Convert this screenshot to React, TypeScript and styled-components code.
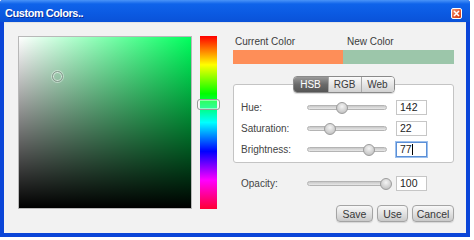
import React from "react";
import styled, { createGlobalStyle } from "styled-components";

const Global = createGlobalStyle`
  html, body { margin: 0; padding: 0; background: #ffffff; }
  * { box-sizing: border-box; }
`;

const Window = styled.div`
  width: 470px;
  height: 237px;
  background: #0b45d8;
  display: flex;
  flex-direction: column;
  font-family: "Liberation Sans", Arial, sans-serif;
  border-radius: 3px 3px 0 0;
`;

const TitleBar = styled.div`
  height: 22px;
  padding: 0 8px 0 5px;
  display: flex;
  align-items: center;
  justify-content: space-between;
  background: linear-gradient(to bottom, #4a94f8 0%, #0f63ea 18%, #0b5ae2 60%, #0a52d8 100%);
  border-radius: 3px 3px 0 0;
`;

const Title = styled.span`
  color: #ffffff;
  font-weight: bold;
  font-size: 11px;
  letter-spacing: -0.45px;
  text-shadow: 1px 1px 0 #0a2f9a;
  padding-top: 3px;
`;

const CloseBtn = styled.div`
  width: 11px;
  height: 11px;
  margin-top: 4px;
  border: 1px solid #ffffff;
  border-radius: 2px;
  background: linear-gradient(135deg, #f39a78 0%, #e2542c 60%, #c83a16 100%);
  display: flex;
  align-items: center;
  justify-content: center;
`;

const Body = styled.div`
  flex: 1;
  margin: 0 4px 4px 4px;
  background: #f2f2f2;
  display: flex;
  padding: 13px 12px 0 14px;
  border-top: 1px solid #e4e4e4;
`;

const Field = styled.div`
  position: relative;
  width: 174px;
  height: 173px;
  flex: none;
  background:
    linear-gradient(to top, #000000, rgba(0, 0, 0, 0)),
    linear-gradient(to right, #ffffff, hsl(142, 100%, 50%));
  border: 1px solid #b8b8b8;
`;

const FieldMarker = styled.div`
  position: absolute;
  width: 11px;
  height: 11px;
  margin: -5.5px 0 0 -5.5px;
  border-radius: 50%;
  border: 1.5px solid #8a9a90;
  box-shadow: inset 0 0 0 1px rgba(255, 255, 255, 0.6), 0 0 0 1px rgba(255, 255, 255, 0.4);
`;

const HueBar = styled.div`
  position: relative;
  width: 17px;
  height: 173px;
  flex: none;
  margin-left: 8px;
  background: linear-gradient(
    to bottom,
    #ff0000 0%,
    #ffff00 16.67%,
    #00ff00 33.33%,
    #00ffff 50%,
    #0000ff 66.67%,
    #ff00ff 83.33%,
    #ff0033 100%
  );
`;

const HueMarker = styled.div`
  position: absolute;
  left: -3px;
  width: 23px;
  height: 11px;
  margin-top: -5px;
  border: 1.5px solid #9a9a9a;
  border-radius: 3px;
  background: rgba(255, 255, 255, 0.18);
  box-shadow: inset 0 0 0 1px rgba(255, 255, 255, 0.45);
`;

const Right = styled.div`
  flex: 1;
  margin-left: 16px;
  display: flex;
  flex-direction: column;
  color: #3c3c3c;
  font-size: 10px;
`;

const LabelRow = styled.div`
  display: flex;
  height: 12px;
  line-height: 12px;
  padding-left: 2px;
`;

const LabelCell = styled.span<{ $w?: number }>`
  width: ${(p) => (p.$w ? `${p.$w}px` : "auto")};
`;

const Swatches = styled.div`
  display: flex;
  height: 14px;
  margin-top: 2px;
`;

const Swatch = styled.div<{ $c: string; $w?: number }>`
  background: ${(p) => p.$c};
  ${(p) => (p.$w ? `width: ${p.$w}px;` : "flex: 1;")}
`;

const Tabs = styled.div`
  position: relative;
  z-index: 1;
  align-self: center;
  margin-top: 12px;
  display: flex;
  height: 17px;
  border: 1px solid #8a8a8a;
  border-radius: 4px;
  overflow: hidden;
  box-shadow: 0 1px 1px rgba(0, 0, 0, 0.15);
`;

const Tab = styled.div<{ $active?: boolean; $w: number }>`
  width: ${(p) => p.$w}px;
  display: flex;
  align-items: center;
  justify-content: center;
  font-size: 10px;
  color: ${(p) => (p.$active ? "#ffffff" : "#3a3a3a")};
  background: ${(p) =>
    p.$active
      ? "linear-gradient(to bottom, #9a9a9a, #6a6a6a 50%, #555555)"
      : "linear-gradient(to bottom, #fbfbfb, #e6e6e6 50%, #d2d2d2)"};
  & + & {
    border-left: 1px solid #a8a8a8;
  }
`;

const Panel = styled.div`
  margin-top: -9px;
  padding: 12px 0 2px 7px;
  background: #ffffff;
  border: 1px solid #c4c4c4;
  border-radius: 3px;
`;

const Row = styled.div`
  display: grid;
  grid-template-columns: 66px 89px 31px;
  align-items: center;
  height: 21px;
`;

const OpacityRow = styled(Row)`
  margin-top: 10px;
  padding-left: 8px;
`;

const RowLabel = styled.span`
  font-size: 10px;
  color: #444444;
`;

const Track = styled.div`
  position: relative;
  width: 80px;
  height: 5px;
  border-radius: 3px;
  border: 1px solid #b4b4b4;
  background: linear-gradient(to bottom, #c8c8c8, #e8e8e8);
`;

const Thumb = styled.div`
  position: absolute;
  top: 50%;
  width: 12px;
  height: 12px;
  margin: -6px 0 0 -6px;
  border-radius: 50%;
  border: 1px solid #9c9c9c;
  background: radial-gradient(circle at 50% 35%, #f4f4f4, #cfcfcf 60%, #b5b5b5);
`;

const Input = styled.div<{ $focus?: boolean }>`
  height: 15px;
  background: #ffffff;
  border: 1px solid ${(p) => (p.$focus ? "#5b8fd6" : "#c6c6c6")};
  box-shadow: ${(p) => (p.$focus ? "0 0 0 1px #9cc0ee" : "none")};
  font-size: 10.5px;
  color: #222222;
  line-height: 13px;
  padding-left: 3px;
  display: flex;
  align-items: center;
`;

const Caret = styled.span`
  display: inline-block;
  width: 1px;
  height: 11px;
  background: #000000;
  margin-left: 0.5px;
`;

const Buttons = styled.div`
  display: flex;
  justify-content: flex-end;
  gap: 4px;
  margin-top: 11px;
`;

const Button = styled.div<{ $w: number }>`
  width: ${(p) => p.$w}px;
  height: 17px;
  border: 1px solid #a4a4a4;
  border-radius: 4px;
  background: linear-gradient(to bottom, #f8f8f8, #e2e2e2 50%, #c9c9c9);
  font-size: 10.5px;
  color: #383838;
  display: flex;
  align-items: center;
  justify-content: center;
  box-shadow: 0 1px 1px rgba(0, 0, 0, 0.12);
`;

type SliderRow = { label: string; pct: number; value: string; focus?: boolean };

const rows: SliderRow[] = [
  { label: "Hue:", pct: 142 / 360, value: "142" },
  { label: "Saturation:", pct: 0.22, value: "22" },
  { label: "Brightness:", pct: 0.77, value: "77", focus: true },
];

function Slider({ pct }: { pct: number }) {
  return (
    <Track>
      <Thumb style={{ left: `${6 + pct * 72}px` }} />
    </Track>
  );
}

export default function App() {
  return (
    <>
      <Global />
      <Window>
        <TitleBar>
          <Title>Custom Colors..</Title>
          <CloseBtn>
            <svg width="7" height="7" viewBox="0 0 7 7">
              <path d="M1 1 L6 6 M6 1 L1 6" stroke="#ffffff" strokeWidth="1.6" />
            </svg>
          </CloseBtn>
        </TitleBar>
        <Body>
          <Field>
            <FieldMarker style={{ left: `${0.22 * 174}px`, top: `${(1 - 0.77) * 173}px` }} />
          </Field>
          <HueBar>
            <HueMarker style={{ top: `${(142 / 360) * 173}px` }} />
          </HueBar>
          <Right>
            <LabelRow>
              <LabelCell $w={112}>Current Color</LabelCell>
              <LabelCell>New Color</LabelCell>
            </LabelRow>
            <Swatches>
              <Swatch $c="#fe8e58" $w={110} />
              <Swatch $c="#9cc6aa" />
            </Swatches>
            <Tabs>
              <Tab $active $w={34}>HSB</Tab>
              <Tab $w={33}>RGB</Tab>
              <Tab $w={33}>Web</Tab>
            </Tabs>
            <Panel>
              {rows.map((r) => (
                <Row key={r.label}>
                  <RowLabel>{r.label}</RowLabel>
                  <Slider pct={r.pct} />
                  <Input $focus={r.focus}>
                    {r.value}
                    {r.focus && <Caret />}
                  </Input>
                </Row>
              ))}
            </Panel>
            <OpacityRow>
              <RowLabel>Opacity:</RowLabel>
              <Slider pct={1} />
              <Input>100</Input>
            </OpacityRow>
            <Buttons>
              <Button $w={37}>Save</Button>
              <Button $w={31}>Use</Button>
              <Button $w={42}>Cancel</Button>
            </Buttons>
          </Right>
        </Body>
      </Window>
    </>
  );
}
